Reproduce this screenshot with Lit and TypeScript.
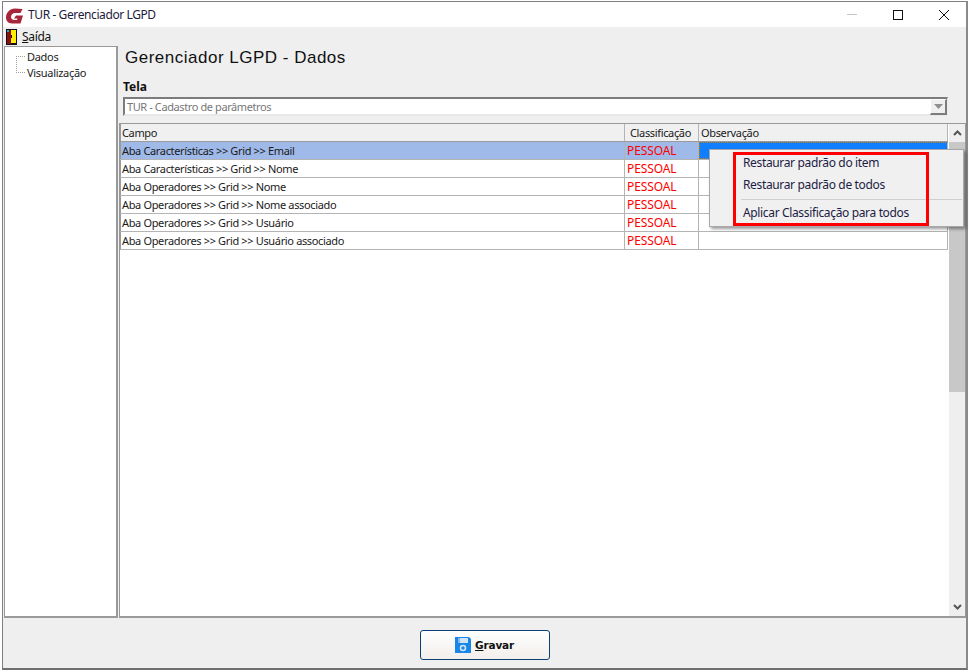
import { LitElement, html, css, svg } from "lit";
import { customElement } from "lit/decorators.js";

const rows = [
  "Aba Características >> Grid >> Email",
  "Aba Características >> Grid >> Nome",
  "Aba Operadores >> Grid >> Nome",
  "Aba Operadores >> Grid >> Nome associado",
  "Aba Operadores >> Grid >> Usuário",
  "Aba Operadores >> Grid >> Usuário associado",
];

@customElement("app-root")
export class AppRoot extends LitElement {
  static styles = css`
    :host { display: block; width: 969px; height: 672px; background: #fff; font-family: "Noto Sans", Tahoma, sans-serif; overflow: hidden; }
    * { box-sizing: border-box; }
    .window { position: relative; margin: 1px 0 0 2px; width: 966px; height: 669px; border: 1px solid #7f7f7f; border-right: 2px solid #8a8a8a; border-bottom: 2px solid #6f6f6f; background: #efefef; display: flex; flex-direction: column; }
    .titlebar { height: 25px; flex: none; background: #fff; display: flex; align-items: center; padding-left: 3px; }
    .title { font-size: 12px; color: #1c1c3c; margin-left: 5px; letter-spacing: -0.4px; }
    .logo { width: 17px; height: 16px; margin-top: 3px; }
    .controls { margin-left: auto; margin-right: -1px; display: flex; height: 100%; }
    .ctl { width: 46px; display: flex; align-items: center; justify-content: center; }
    .menubar { height: 19px; flex: none; display: flex; align-items: center; padding-left: 3px; font-size: 12px; letter-spacing: -0.3px; color: #111; gap: 5px; }
    .main { height: 572px; flex: none; display: flex; padding-left: 1px; }
    .tree { width: 114px; flex: none; height: 572px; margin-right: 1px; background: #fff; border: 1px solid #9a9a9a; border-width: 1px 2px 2px 1px; font-size: 11px; letter-spacing: -0.3px; color: #222; padding: 1px 0 0 11px; }
    .node { height: 16px; line-height: 15px; display: flex; align-items: center; gap: 2px; }
    .right { flex: 1; display: flex; flex-direction: column; min-width: 0; height: 572px; }
    h1 { margin: 0; font: 400 17px/22px "Liberation Sans", sans-serif; letter-spacing: 0.5px; color: #111; padding: 1px 0 0 6px; height: 23px; display: flex; align-items: center; }
    .lab { font: 700 12px/14px "Noto Sans", sans-serif; color: #111; padding-left: 4px; margin-top: 11px; height: 15px; }
    .combo { margin: 2px 0 0 4px; height: 19px; width: 825px; flex: none; background: #fff; border: 2px solid #7c7c7c; border-right: 1px solid #ececec; border-bottom: 2px solid #e8e8e8; display: flex; align-items: stretch; font-size: 11px; letter-spacing: -0.4px; color: #777; }
    .combo span { flex: 1; line-height: 16px; padding-left: 2px; }
    .drop { width: 17px; background: #efefef; border: 1px solid #fff; border-right: 2px solid #7c7c7c; border-bottom: 2px solid #7c7c7c; margin-bottom: -1px; display: flex; align-items: center; justify-content: center; }
    .grid { margin-top: 7px; flex: 1; border: 1px solid #9a9a9a; border-bottom-width: 2px; background: #fff; display: flex; min-height: 0; }
    .table { flex: 1; min-width: 0; font-size: 11px; letter-spacing: -0.35px; }
    .row { display: grid; grid-template-columns: 505px 74px 249px; height: 18px; line-height: 18px; color: #1a1a1a; border-bottom: 1px solid #b4b4b4; width: 828px; }
    .row > div { border-right: 1px solid #b4b4b4; padding-left: 2px; white-space: nowrap; overflow: hidden; }
    .row > div:first-child { border-left: 1px solid #9a9a9a; padding-left: 1px; }
    .head { background: #f0f0f0; border-bottom-color: #9a9a9a; }
    .head > div:nth-child(2) { padding-left: 5px; }
    .sel { background: #9fb9e8; }
    .row > .red { color: #f00; font-size: 12px; letter-spacing: -0.1px; }
    .obs-sel { background: #0f7fff; border: 1px dotted #d08000; }
    .scroll { width: 16px; flex: none; background: #efefef; display: flex; flex-direction: column; margin-left: 1px; }
    .sb-btn { height: 18px; display: flex; align-items: center; justify-content: center; flex: none; }
    .sb-top { height: 18px; }
    .thumb { height: 250px; background: #c8c8c8; flex: none; }
    .sb-fill { flex: 1; }
    .footer { flex: 1; display: flex; align-items: flex-start; justify-content: center; padding-top: 12px; }
    .btn { width: 130px; height: 30px; border: 1px solid #0a3f78; border-radius: 3px; background: linear-gradient(#ffffff, #f2eeeb); display: flex; align-items: center; justify-content: center; gap: 4px; font: 700 10.5px "DejaVu Sans", sans-serif; letter-spacing: -0.2px; color: #111; padding: 0; }
    .menu { position: absolute; left: 706px; top: 147px; width: 255px; height: 78px; background: #f0f0f0; border: 1px solid #a8a8a8; box-shadow: 2px 2px 3px rgba(0,0,0,.4); font-size: 12px; letter-spacing: -0.35px; color: #1c1c44; display: flex; flex-direction: column; padding: 2px 0 0 33px; }
    .mi { height: 22px; line-height: 22px; white-space: nowrap; flex: none; }
    .sep { height: 1px; flex: none; background: #cfcfcf; margin: 3px 1px 2px -2px; }
    .redbox { position: absolute; left: 730px; top: 150px; width: 196px; height: 74px; border: 3px solid #f00; }
  `;

  private logo() {
    return svg`<svg class="logo" viewBox="0 0 17 16"><path d="M16.5 1 L14.5 5 H9 C6.5 5 5 7 5 9 C5 11 6.5 12 8.5 12 H11 L11.5 10.5 H8 L10 7.5 H17 L14.5 15.5 H6 C2 15.5 0 12.5 0 9.5 C0 4.5 4 .5 9 .5 Z" fill="#a8263a"/></svg>`;
  }

  private treeLine(first: boolean) {
    return svg`<svg width="9" height="16"><path d="${first ? "M0.5 8V16" : "M0.5 0V8"}M0 8.5H9" stroke="#a0a0a0" stroke-dasharray="1 1" fill="none"/></svg>`;
  }

  render() {
    return html`
      <div class="window">
        <div class="titlebar">
          ${this.logo()}
          <span class="title">TUR - Gerenciador LGPD</span>
          <div class="controls">
            <div class="ctl"><svg width="10" height="1"><rect width="10" height="1" fill="#c4c4c4"/></svg></div>
            <div class="ctl"><svg width="10" height="10"><rect x=".5" y=".5" width="9" height="9" fill="none" stroke="#111"/></svg></div>
            <div class="ctl"><svg width="10" height="10"><path d="M0 0L10 10M10 0L0 10" stroke="#111" fill="none"/></svg></div>
          </div>
        </div>
        <div class="menubar">
          <svg width="11" height="16" viewBox="0 0 11 16"><rect width="11" height="16" fill="#111"/><rect x="4" y="1" width="6" height="13" fill="#ffee00"/><path d="M1 1H5V15H1Z" fill="#8a1010"/><rect x="1" y="1" width="2" height="2" fill="#19b5c8"/><rect x="5" y="6" width="1" height="3" fill="#111"/></svg>
          <span><u>S</u>aída</span>
        </div>
        <div class="main">
          <div class="tree">
            <div class="node">${this.treeLine(true)}Dados</div>
            <div class="node">${this.treeLine(false)}Visualização</div>
          </div>
          <div class="right">
            <h1>Gerenciador LGPD - Dados</h1>
            <div class="lab">Tela</div>
            <div class="combo">
              <span>TUR - Cadastro de parâmetros</span>
              <div class="drop"><svg width="9" height="5"><path d="M0 0H9L4.5 5Z" fill="#8f8f8f"/></svg></div>
            </div>
            <div class="grid">
              <div class="table">
                <div class="row head"><div>Campo</div><div>Classificação</div><div>Observação</div></div>
                ${rows.map((r, i) => html`
                  <div class="row ${i === 0 ? "sel" : ""}">
                    <div>${r}</div>
                    <div class="red">PESSOAL</div>
                    <div class="${i === 0 ? "obs-sel" : ""}"></div>
                  </div>`)}
              </div>
              <div class="scroll">
                <div class="sb-btn sb-top"><svg width="9" height="6"><path d="M1 5L4.5 1.5L8 5" fill="none" stroke="#555" stroke-width="2"/></svg></div>
                <div class="thumb"></div>
                <div class="sb-fill"></div>
                <div class="sb-btn"><svg width="9" height="6"><path d="M1 1L4.5 4.5L8 1" fill="none" stroke="#555" stroke-width="2"/></svg></div>
              </div>
            </div>
          </div>
        </div>
        <div class="footer">
          <button class="btn">
            <svg width="16" height="16" viewBox="0 0 16 16"><path d="M0 0H14L16 2V16H0Z" fill="#1a86e8"/><rect x="3" y="1" width="10" height="5" fill="#cfe4f7"/><rect x="3" y="1" width="2" height="5" fill="#7db8ee"/><circle cx="8" cy="11" r="2.5" fill="none" stroke="#d5e8f9" stroke-width="1.5"/></svg>
            <span><u>G</u>ravar</span>
          </button>
        </div>
        <div class="menu">
          <div class="mi">Restaurar padrão do item</div>
          <div class="mi">Restaurar padrão de todos</div>
          <div class="sep"></div>
          <div class="mi">Aplicar Classificação para todos</div>
        </div>
        <div class="redbox"></div>
      </div>
    `;
  }
}
